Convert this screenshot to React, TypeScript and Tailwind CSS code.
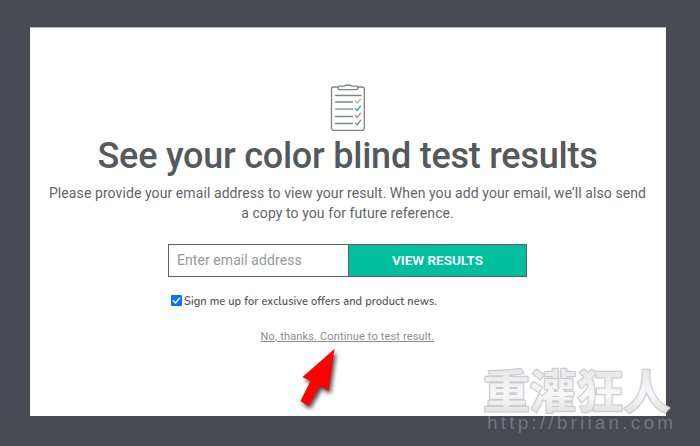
function ClipboardIcon() {
  return (
    <svg width="36" height="48" viewBox="0 0 36 48" fill="none" stroke="#808284" strokeWidth="1.3" strokeLinecap="round" strokeLinejoin="round">
      <path d="M8 3H3.500Q1.500 3 1.500 5V44Q1.500 46.300 4 46.300H32Q34.300 46.300 34.300 44V5Q34.300 3 32.300 3H28" />
      <path d="M10 2.200H14Q15.500 1 18 1T22 2.200H26Q28 2.200 28 3.900T26 5.700H10Q8 5.700 8 3.900T10 2.200Z" />
      <path d="M5.500 11.500H31M5.500 18H22.500M5.500 25.200H22.500M5.500 32.500H22.500M5.500 39.500H22.500" />
      <path d="M25.500 17L27.200 19L30.500 15" stroke="#c3ba91" />
      <path d="M25.500 24.500L27.200 26.500L30.500 22" stroke="#30b89b" />
      <path d="M25.500 31.700L27.200 33.700L30.500 29.200" stroke="#d77595" />
      <path d="M25.500 38.800L27.200 40.800L30.500 36.300" />
    </svg>
  );
}

function Watermark() {
  return (
    <svg className="pointer-events-none absolute left-[470px] top-[350px]" width="230" height="96" viewBox="0 0 230 96">
      <defs>
        <linearGradient id="silver" x1="0" y1="0" x2="0" y2="1">
          <stop offset="0" stopColor="#dededf" />
          <stop offset="0.600" stopColor="#f8f8f8" />
          <stop offset="1" stopColor="#d8d8da" />
        </linearGradient>
      </defs>
      <text x="13" y="58" textLength="187" lengthAdjust="spacingAndGlyphs" fontSize="46" fill="url(#silver)" stroke="#cbcbcd" strokeWidth="2.400" strokeLinejoin="round" paintOrder="stroke" className="font-['Noto_Sans_CJK_TC',sans-serif] font-bold">重灌狂人</text>
      <text x="17" y="79" textLength="186" fontSize="19" fill="#747680" className="font-['Liberation_Sans',sans-serif]">http://briian.com</text>
    </svg>
  );
}

export default function App() {
  return (
    <div className="relative h-[446px] w-[700px] overflow-hidden bg-[#474954] pl-[30px] pt-[27px] font-['Roboto',sans-serif] text-[#55595b]">
      <main className="flex h-[389px] w-[636px] flex-col items-center border-t border-[#b5b6bb] bg-white pr-px pt-[56px]">
        <ClipboardIcon />
        <h1 className="mt-[2px] whitespace-nowrap text-[36px] font-medium leading-[44px] tracking-[-0.240px]">See your color blind test results</h1>
        <p className="mt-[5px] whitespace-nowrap text-center text-[14px] leading-5 tracking-[0.085px] text-[#616568]">
          Please provide your email address to view your result. When you add your email, we’ll also send
          <br />a copy to you for future reference.
        </p>
        <form className="mt-[21px] flex h-[33px] w-[359px] border border-[#5c6063]">
          <input aria-label="Email address" placeholder="Enter email address" className="w-[179px] px-2 text-[14px] tracking-[0.070px] outline-none placeholder:text-[#96989a]" />
          <button type="button" className="flex-1 border-l border-[#5c6063] bg-[#00bf9f] text-[13.500px] font-semibold text-white">VIEW RESULTS</button>
        </form>
        <label className="mt-[17px] flex h-4 w-[353px] items-center gap-[2px] whitespace-nowrap font-['Nunito','Noto_Sans',sans-serif] text-[11px] font-semibold tracking-[0.080px]">
          <span className="mb-[3px] flex h-[11px] w-[11px] items-center justify-center rounded-[1px] bg-[#0875f5]">
            <svg width="9" height="9" viewBox="0 0 9 9" fill="none" stroke="white" strokeWidth="1.500"><path d="M1 4.500L3.500 7L8 1.800" /></svg>
          </span>
          Sign me up for exclusive offers and product news.
        </label>
        <a href="#" className="mt-[19px] whitespace-nowrap text-[11px] leading-4 tracking-[0.150px] text-[#8b8d8f] underline">No, thanks. Continue to test result.</a>
      </main>
      <svg className="absolute left-[290px] top-[340px]" width="60" height="75" viewBox="0 0 60 75">
        <path className="drop-shadow-[2px_3px_2px_rgba(0,0,0,0.7)]" d="M44.500 9L12.500 37L20.500 41L10.500 61L18.500 66L30 46L38.500 51Z" fill="#fe0000" />
      </svg>
      <Watermark />
    </div>
  );
}
